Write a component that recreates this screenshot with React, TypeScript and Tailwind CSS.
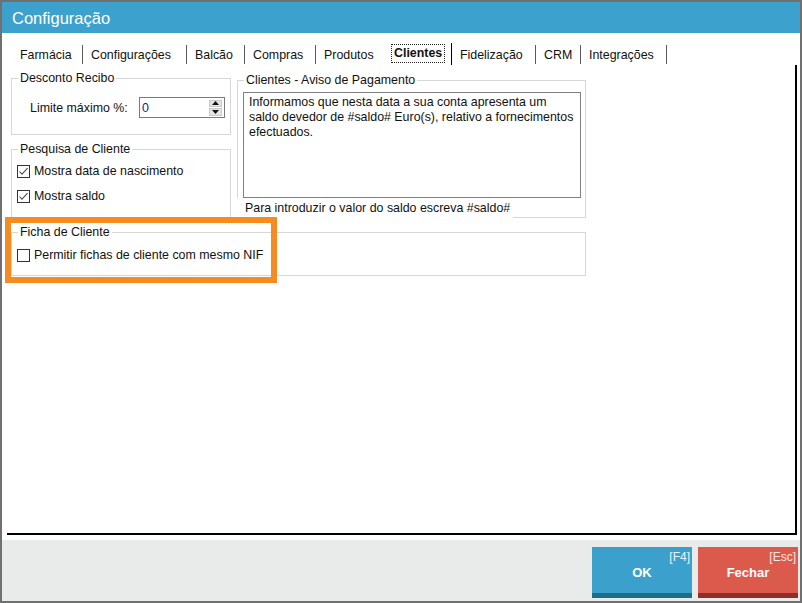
import React from "react";

function Check({ checked }: { checked: boolean }) {
  return (
    <span className="w-[13px] h-[13px] border border-[#333333] bg-white flex items-center justify-center shrink-0">
      {checked && (
        <svg width="11" height="11" viewBox="0 0 11 11">
          <path d="M1.5 5.5 L4 8.2 L9.6 2.2" fill="none" stroke="#4a4a4a" strokeWidth="1.1" />
        </svg>
      )}
    </span>
  );
}

function Row({ checked, label }: { checked: boolean; label: string }) {
  return (
    <div className="flex items-center gap-[4px] ml-[5px] h-[20px]">
      <Check checked={checked} />
      <span className="leading-[20px] whitespace-nowrap">{label}</span>
    </div>
  );
}

const tabs: { label: string; w: string; sep: "gray" | "black" | "none"; active?: boolean; pl: string }[] = [
  { label: "Farmácia", w: "w-[71px]", sep: "gray", pl: "pl-[9px]" },
  { label: "Configurações", w: "w-[103px]", sep: "gray", pl: "pl-[8px]" },
  { label: "Balcão", w: "w-[57px]", sep: "gray", pl: "pl-[8px]" },
  { label: "Compras", w: "w-[70px]", sep: "gray", pl: "pl-[8px]" },
  { label: "Produtos", w: "w-[68px]", sep: "none", pl: "pl-[8px]" },
  { label: "Clientes", w: "w-[67px]", sep: "black", active: true, pl: "pl-[9px]" },
  { label: "Fidelização", w: "w-[83px]", sep: "gray", pl: "pl-[8px]" },
  { label: "CRM", w: "w-[44px]", sep: "gray", pl: "pl-[8px]" },
  { label: "Integrações", w: "w-[85px]", sep: "gray", pl: "pl-[8px]" },
];

export default function App() {
  return (
    <div className="relative w-[802px] h-[603px] border-2 border-[#707070] bg-white flex flex-col font-['Liberation_Sans',Arial,sans-serif] text-[12.4px] text-[#111111] overflow-hidden">
      {/* Title bar */}
      <div className="h-[31px] bg-[#3da1cd] flex items-center pl-[10px] shrink-0">
        <span className="text-white text-[16.5px] leading-[20px]">Configuração</span>
      </div>

      {/* Content */}
      <div className="h-[507px] shrink-0 flex flex-col">
        {/* Tabs */}
        <div className="mt-[10px] h-[22px] pl-[9px] flex items-stretch shrink-0">
          {tabs.map((t) => (
            <div key={t.label} className="flex items-stretch">
              <div className={`${t.w} ${t.pl} flex items-center`}>
                {t.active ? (
                  <span className="font-bold leading-[15px] outline outline-1 outline-dotted outline-[#222222] outline-offset-[1px] -mt-[2px] pl-[1px] pr-[1px]">
                    {t.label}
                  </span>
                ) : (
                  <span className="leading-[15px] mt-[2px]">{t.label}</span>
                )}
              </div>
              {t.sep === "gray" && <div className="w-px h-[19px] mt-[2px] bg-[#5a5a5a]" />}
              {t.sep === "black" && <div className="w-px h-[22px] bg-[#000000]" />}
            </div>
          ))}
        </div>

        {/* Tab sheet */}
        <div className="ml-[5px] w-[790px] h-[470px] border-r-2 border-b-2 border-black flex flex-col pl-[4px] shrink-0">
          <div className="flex gap-[6px]">
            {/* Left column */}
            <div className="w-[220px] flex flex-col">
              <fieldset className="mt-[6px] h-[64px] border border-[#d7d7d7]">
                <legend className="ml-[6px] px-[2px] leading-[14px]">Desconto Recibo</legend>
                <div className="mt-[12px] flex items-center">
                  <span className="ml-[18px] w-[109px] leading-[20px]">Limite máximo %:</span>
                  <div className="w-[86px] h-[21px] border border-[#7a7a7a] bg-white flex items-center">
                    <span className="pl-[2px] flex-1 text-[#1a1a70] leading-[18px]">0</span>
                    <div className="w-[13px] h-[16px] mr-[2px] flex flex-col gap-px">
                      <div className="flex-1 bg-[#e4e4e4] border border-[#c8c8c8] flex items-center justify-center">
                        <svg width="7" height="4" viewBox="0 0 7 4">
                          <path d="M0 4 L3.5 0 L7 4Z" fill="#111" />
                        </svg>
                      </div>
                      <div className="flex-1 bg-[#e4e4e4] border border-[#c8c8c8] flex items-center justify-center">
                        <svg width="7" height="4" viewBox="0 0 7 4">
                          <path d="M0 0 L3.5 4 L7 0Z" fill="#111" />
                        </svg>
                      </div>
                    </div>
                  </div>
                </div>
              </fieldset>

              <fieldset className="mt-[7px] h-[76px] border border-[#d7d7d7]">
                <legend className="ml-[6px] px-[2px] leading-[14px]">Pesquisa de Cliente</legend>
                <div className="mt-[5px] flex flex-col gap-[5px]">
                  <Row checked label="Mostra data de nascimento" />
                  <Row checked label="Mostra saldo" />
                </div>
              </fieldset>
            </div>

            {/* Right column */}
            <fieldset className="mt-[8px] w-[349px] h-[145px] border border-[#d7d7d7]">
              <legend className="ml-[6px] px-[2px] leading-[14px]">Clientes - Aviso de Pagamento</legend>
              <div className="mt-[5px] ml-[5px] w-[338px] h-[106px] border border-[#808080] bg-white px-[5px] pt-[2px] leading-[15px] whitespace-nowrap overflow-hidden">
                <div>Informamos que nesta data a sua conta apresenta um</div>
                <div>saldo devedor de #saldo# Euro(s), relativo a fornecimentos</div>
                <div>efectuados.</div>
              </div>
              <div className="relative -ml-px w-fit bg-white pl-[8px] pr-[3px] h-[20px] leading-[20px] whitespace-nowrap">
                Para introduzir o valor do saldo escreva #saldo#
              </div>
            </fieldset>
          </div>

          <fieldset className="mt-[7px] w-[575px] h-[51px] border border-[#d7d7d7]">
            <legend className="ml-[6px] px-[2px] leading-[14px]">Ficha de Cliente</legend>
            <div className="mt-[6px]">
              <Row checked={false} label="Permitir fichas de cliente com mesmo NIF" />
            </div>
          </fieldset>
        </div>
      </div>

      {/* Footer */}
      <div className="h-[61px] bg-[#e9eaea] flex justify-end items-start pt-[7px] pr-[2px] gap-[6px] shrink-0">
        <button className="relative w-[100px] h-[51px] bg-[#3ca0cd] border-b-[5px] border-[#1b6e84] text-white">
          <span className="absolute right-[2px] top-[3px] text-[12px] leading-[14px] text-[#e8f4fa]">[F4]</span>
          <span className="font-bold text-[13px] leading-[16px] relative top-[3px]">OK</span>
        </button>
        <button className="relative w-[100px] h-[51px] bg-[#dc5a4c] border-b-[5px] border-[#8e2f2b] text-white">
          <span className="absolute right-[2px] top-[3px] text-[12px] leading-[14px] text-[#fbe6e3]">[Esc]</span>
          <span className="font-bold text-[13px] leading-[16px] relative top-[3px]">Fechar</span>
        </button>
      </div>

      {/* Highlight overlay */}
      <div className="absolute left-[3px] top-[215px] w-[272px] h-[66px] border-[6px] border-[#f68b1f] pointer-events-none" />
    </div>
  );
}
